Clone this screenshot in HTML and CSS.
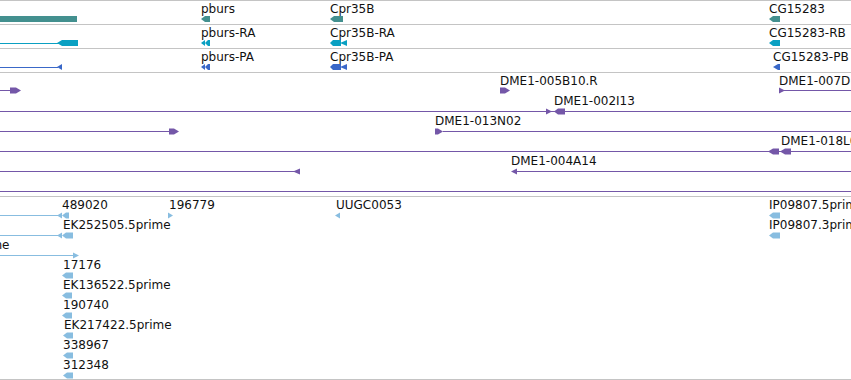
FILE: index.html
```html
<!DOCTYPE html>
<html lang="en">
<head>
<meta charset="UTF-8">
<title>Annotation tracks</title>
<link rel="stylesheet" href="styles.css">
</head>
<body>

<div class="panel">
    <!-- genes -->
    <div class="track">
        <svg class="lane gene" width="851" height="23" viewBox="0 1 851 23">
            <rect x="0" y="16" width="77" height="6"/>
            <text x="201" y="12.5">pburs</text>
            <polygon points="201,19 205,16 210,16 210,22 205,22"/>
            <text x="330" y="12.5">Cpr35B</text>
            <polygon points="330,19 334,16 343,16 343,22 334,22"/>
            <text x="769" y="12.5">CG15283</text>
            <polygon points="769,19 773,16 780,16 780,22 773,22"/>
        </svg>
    </div>

    <!-- transcripts -->
    <div class="track">
        <svg class="lane mrna" width="851" height="23" viewBox="0 25 851 23">
            <line x1="0" y1="43.5" x2="60" y2="43.5"/>
            <polygon points="57,43 62,40 78,40 78,46 62,46"/>
            <text x="201" y="37">pburs-RA</text>
            <polygon points="201,43 205,40 205,46"/>
            <polygon points="205,43 208,40 210,40 210,46 208,46"/>
            <text x="330" y="37">Cpr35B-RA</text>
            <polygon points="330,43 333,40 341,40 341,46 333,46"/>
            <polygon points="340,43 347,40 347,46"/>
            <text x="769" y="37">CG15283-RB</text>
            <polygon points="769,43 773,40 780,40 780,46 773,46"/>
        </svg>
    </div>

    <!-- proteins -->
    <div class="track">
        <svg class="lane prot" width="851" height="23" viewBox="0 49 851 23">
            <line x1="0" y1="67.5" x2="58" y2="67.5"/>
            <polygon points="57,67 62,64 62,70"/>
            <text x="201" y="61">pburs-PA</text>
            <polygon points="201,67 205,64 205,70"/>
            <polygon points="205,67 208,64 210,64 210,70 208,70"/>
            <text x="330" y="61">Cpr35B-PA</text>
            <polygon points="330,67 333,64 341,64 341,70 333,70"/>
            <polygon points="340,67 347,64 347,70"/>
            <text x="773" y="61">CG15283-PB</text>
            <polygon points="773,67 778,64 780,64 780,70 778,70"/>
        </svg>
    </div>

    <!-- clone ends -->
    <div class="track">
        <svg class="lane clone" width="851" height="123" viewBox="0 73 851 123">
            <line x1="0" y1="90.5" x2="12" y2="90.5"/>
            <polygon points="10,87.5 16,87.5 21,90.5 16,93.5 10,93.5"/>
            <text x="500" y="85">DME1-005B10.R</text>
            <polygon points="500,87.5 505,87.5 510,90.5 505,93.5 500,93.5"/>
            <text x="779" y="85">DME1-007D10.R</text>
            <polygon points="779,87.5 785,90.5 779,93.5"/>
            <line x1="784" y1="90.5" x2="851" y2="90.5"/>

            <line x1="0" y1="111.5" x2="851" y2="111.5"/>
            <polygon points="546,108.5 552,111.5 546,114.5"/>
            <text x="554" y="105">DME1-002I13</text>
            <polygon points="554,111.5 558,108.5 565,108.5 565,114.5 558,114.5"/>

            <line x1="0" y1="131.5" x2="172" y2="131.5"/>
            <polygon points="169,128.5 174,128.5 179,131.5 174,134.5 169,134.5"/>
            <text x="435" y="125">DME1-013N02</text>
            <polygon points="435,128.5 438,128.5 443,131.5 438,134.5 435,134.5"/>
            <line x1="443" y1="131.5" x2="851" y2="131.5"/>

            <line x1="0" y1="151.5" x2="851" y2="151.5"/>
            <polygon points="768,151.5 773,148.5 779,148.5 779,154.5 773,154.5"/>
            <text x="781" y="145">DME1-018L05.R</text>
            <polygon points="780,151.5 785,148.5 791,148.5 791,154.5 785,154.5"/>

            <line x1="0" y1="171.5" x2="296" y2="171.5"/>
            <polygon points="293,171.5 300,168.5 300,174.5"/>
            <text x="511" y="165">DME1-004A14</text>
            <polygon points="511,171.5 517,168.5 517,174.5"/>
            <line x1="516" y1="171.5" x2="851" y2="171.5"/>

            <line x1="0" y1="191.5" x2="851" y2="191.5"/>
        </svg>
    </div>

    <!-- ESTs -->
    <div class="track last">
        <svg class="lane est" width="851" height="182" viewBox="0 197 851 182">
            <line x1="0" y1="215.5" x2="58" y2="215.5"/>
            <text x="62" y="209">489020</text>
            <polygon points="57,215.5 62,212.5 62,218.5"/>
            <polygon points="62,215.5 66,212.5 69,212.5 69,218.5 66,218.5"/>
            <text x="169" y="209">196779</text>
            <polygon points="168,212.5 173,215.5 168,218.5"/>
            <text x="336" y="209">UUGC0053</text>
            <polygon points="335,215.5 340,212.5 340,218.5"/>
            <text x="769" y="209">IP09807.5prime</text>
            <polygon points="769,215.5 773,212.5 780,212.5 780,218.5 773,218.5"/>

            <line x1="0" y1="235.5" x2="58" y2="235.5"/>
            <text x="63" y="229">EK252505.5prime</text>
            <polygon points="57,235.5 62,232.5 62,238.5"/>
            <polygon points="62,235.5 66,232.5 73,232.5 73,238.5 66,238.5"/>
            <text x="769" y="229">IP09807.3prime</text>
            <polygon points="769,235.5 773,232.5 780,232.5 780,238.5 773,238.5"/>

            <text x="9.5" y="249" text-anchor="end">EK113417.5prime</text>
            <line x1="0" y1="255.5" x2="75" y2="255.5"/>
            <polygon points="73,252.5 79,255.5 73,258.5"/>

            <text x="63" y="269">17176</text>
            <polygon points="62,275.5 66,272.5 73,272.5 73,278.5 66,278.5"/>
            <text x="63" y="289">EK136522.5prime</text>
            <polygon points="62,295.5 66,292.5 72,292.5 72,298.5 66,298.5"/>
            <text x="63" y="309">190740</text>
            <polygon points="62,315.5 66,312.5 72,312.5 72,318.5 66,318.5"/>
            <text x="64" y="329">EK217422.5prime</text>
            <polygon points="63,335.5 67,332.5 73,332.5 73,338.5 67,338.5"/>
            <text x="63" y="349">338967</text>
            <polygon points="63,355.5 67,352.5 73,352.5 73,358.5 67,358.5"/>
            <text x="63" y="369">312348</text>
            <polygon points="63,375.5 67,372.5 73,372.5 73,378.5 67,378.5"/>
        </svg>
    </div>
</div>

</body>
</html>
```

FILE: styles.css
```css
body {
    margin: 0;
    padding: 0;
    background: #ffffff;
    font-family: "DejaVu Sans", Verdana, sans-serif;
    overflow: hidden;
}

.panel {
    width: 851px;
}

.track {
    border-top: 1px solid #c4c4c4;
}

.track.last {
    border-bottom: 1px solid #c4c4c4;
}

.lane {
    display: block;
    overflow: hidden;
}

.lane text {
    font-family: "DejaVu Sans", Verdana, sans-serif;
    font-size: 12px;
    fill: #111111;
    stroke: none;
}

.lane line {
    stroke-width: 1;
}

/* feature colours per track */
.gene rect,
.gene polygon {
    fill: #43908f;
}

.mrna line {
    stroke: #0aa0c2;
}

.mrna polygon {
    fill: #0aa0c2;
}

.prot line {
    stroke: #3a68c8;
}

.prot polygon {
    fill: #3a68c8;
}

.clone line {
    stroke: #7457a8;
}

.clone polygon {
    fill: #7457a8;
}

.est line {
    stroke: #88bde0;
}

.est polygon {
    fill: #88bde0;
}
```
